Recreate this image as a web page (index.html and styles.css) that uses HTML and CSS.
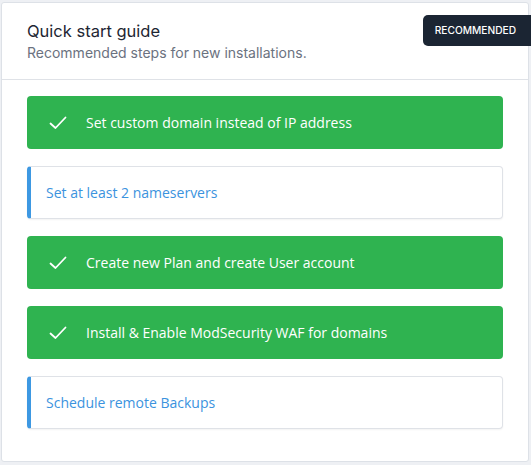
FILE: index.html
```html
<!DOCTYPE html>
<html>
<head>
<meta charset="utf-8">
<link rel="stylesheet" href="styles.css">
</head>
<body>
<div class="card">
  <div class="card-header">
    <h2 class="title">Quick start guide</h2>
    <p class="subtitle">Recommended steps for new installations.</p>
    <span class="badge">RECOMMENDED</span>
  </div>
  <div class="steps">
    <div class="step done">
      <svg class="check" width="18" height="14" viewBox="0 0 18 14"><polyline points="1.5,7.5 6.5,12 16.5,1.5" fill="none" stroke="#fff" stroke-width="1.8" stroke-linecap="round" stroke-linejoin="round"/></svg>
      <span>Set custom domain instead of IP address</span>
    </div>
    <div class="step todo"><span>Set at least 2 nameservers</span></div>
    <div class="step done">
      <svg class="check" width="18" height="14" viewBox="0 0 18 14"><polyline points="1.5,7.5 6.5,12 16.5,1.5" fill="none" stroke="#fff" stroke-width="1.8" stroke-linecap="round" stroke-linejoin="round"/></svg>
      <span>Create new Plan and create User account</span>
    </div>
    <div class="step done">
      <svg class="check" width="18" height="14" viewBox="0 0 18 14"><polyline points="1.5,7.5 6.5,12 16.5,1.5" fill="none" stroke="#fff" stroke-width="1.8" stroke-linecap="round" stroke-linejoin="round"/></svg>
      <span>Install &amp; Enable ModSecurity WAF for domains</span>
    </div>
    <div class="step todo"><span>Schedule remote Backups</span></div>
  </div>
</div>
</body>
</html>
```
FILE: styles.css
```css
html, body { margin: 0; padding: 0; }
html { overflow: hidden; }
body {
  background: #eef0f4;
  padding: 2px 2px 1px 1px;
  font-family: Inter, "Noto Sans", sans-serif;
}
.card {
  position: relative;
  background: #fff;
  border: 1px solid #dde1e7;
  border-radius: 3px;
  height: 460px;
  box-sizing: border-box;
}
.card-header {
  position: relative;
  box-sizing: border-box;
  padding: 17px 25px 0 25px;
  height: 77px;
  border-bottom: 1px solid #dfe2e7;
}
.title {
  margin: 0;
  font-size: 16.5px;
  font-weight: 400;
  color: #1e2633;
  line-height: 22px;
}
.subtitle {
  margin: 1px 0 0 0;
  font-size: 14px;
  color: #6b7280;
  line-height: 20px;
}
.badge {
  position: absolute;
  top: 12px;
  right: -10px;
  background: #1b2533;
  color: #fff;
  font-size: 10.2px;
  font-weight: 500;
  padding: 0 22px 0 12px;
  height: 31px;
  line-height: 31px;
  border-radius: 5px;
}
.steps {
  display: flex;
  flex-direction: column;
  gap: 17px;
  padding: 16px 25px 0 25px;
}
.step {
  height: 53px;
  box-sizing: border-box;
  border-radius: 4px;
  display: flex;
  align-items: center;
  font-family: "Open Sans", sans-serif;
  font-size: 14px;
}
.step.done {
  background: #2fb350;
  color: #fff;
  padding-left: 22px;
}
.check { margin-right: 19px; }
.step.todo {
  background: #fff;
  border: 1px solid #dfe2e7;
  border-left: 4px solid #3d98e2;
  color: #3b93de;
  padding-left: 15px;
  box-shadow: 0 1px 2px rgba(0,0,0,0.05);
}
```
